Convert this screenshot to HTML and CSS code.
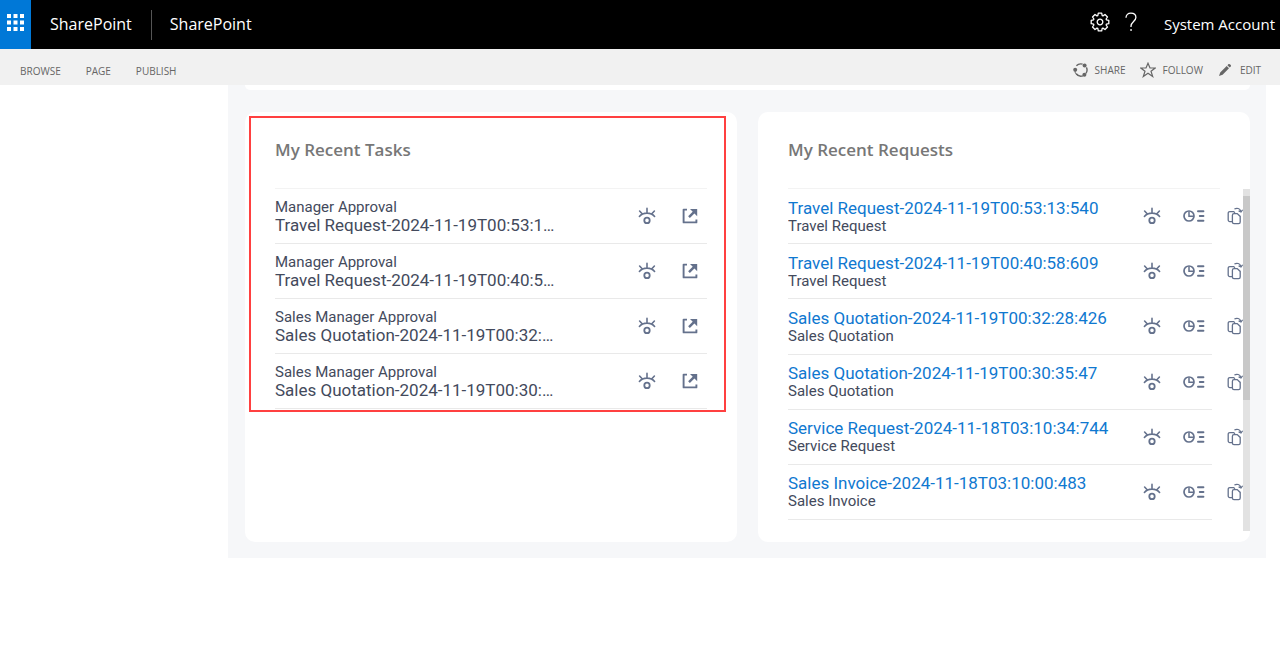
FILE: index.html
```html
<!DOCTYPE html>
<html lang="en">
<head>
    <meta charset="UTF-8">
    <meta name="viewport" content="width=device-width, initial-scale=1.0">
    <title>SharePoint</title>
    <link rel="stylesheet" href="styles.css">
</head>
<body>

    <!-- Shared icons -->
    <svg class="icon-defs" aria-hidden="true">
        <symbol id="icon-view" viewBox="0 0 18 18">
            <path d="M1.4 9.4C5 5 13 5 16.6 9.4M9 1.4v4.6M1.6 4 4.4 7M16.4 4 13.6 7" fill="none" stroke="currentColor" stroke-width="1.6" stroke-linecap="round"/>
            <circle cx="9" cy="13.4" r="2.7" fill="none" stroke="currentColor" stroke-width="1.8"/>
        </symbol>
        <symbol id="icon-open" viewBox="0 0 18 18">
            <path d="M6 2.6H2.6V15.4H15.4V12.4" fill="none" stroke="currentColor" stroke-width="1.9" stroke-linejoin="round"/>
            <path d="M8 10.2 13.5 4.7" fill="none" stroke="currentColor" stroke-width="2.4"/>
            <path d="M9 2h7.2v7.2z" fill="currentColor"/>
        </symbol>
        <symbol id="icon-report" viewBox="0 0 22 14">
            <circle cx="6" cy="7" r="5" fill="none" stroke="currentColor" stroke-width="1.7"/>
            <path d="M6 2.4v4.8h4.6" fill="none" stroke="currentColor" stroke-width="1.5"/>
            <path d="M15 2.2h5.4M16.8 7h3.6M15 11.8h5.4" fill="none" stroke="currentColor" stroke-width="2" stroke-linecap="round"/>
        </symbol>
        <symbol id="icon-copy" viewBox="0 0 16 18">
            <path d="M5 14.6H2.8a1.6 1.6 0 0 1-1.6-1.6V6.2a1.6 1.6 0 0 1 1.6-1.6h3.8L8 5.8" fill="none" stroke="currentColor" stroke-width="1.3"/>
            <path d="M7 6.6h3.2l3 2.8v5.6a1.6 1.6 0 0 1-1.6 1.6H7A1.6 1.6 0 0 1 5.4 15V8.2A1.6 1.6 0 0 1 7 6.6z" fill="none" stroke="currentColor" stroke-width="1.3"/>
            <path d="M7.4 2C10 .6 12.8 1.4 13.8 4.2M15.6 2.8 14 5 11.6 3.9" fill="none" stroke="currentColor" stroke-width="1.2"/>
        </symbol>
    </svg>

    <!-- Suite Bar -->
    <header class="suite-bar">
        <button class="app-launcher" aria-label="App launcher">
            <svg width="17" height="17" viewBox="0 0 17 17" fill="#fff">
                <path d="M0 0h4v4H0zM6.5 0h4v4h-4zM13 0h4v4h-4zM0 6.5h4v4H0zM6.5 6.5h4v4h-4zM13 6.5h4v4h-4zM0 13h4v4H0zM6.5 13h4v4h-4zM13 13h4v4h-4z"/>
            </svg>
        </button>
        <a class="brand" href="#">SharePoint</a>
        <a class="brand brand-site" href="#">SharePoint</a>
        <div class="suite-actions">
            <button aria-label="Settings">
                <svg width="20" height="20" viewBox="-10 -10 20 20" fill="none" stroke="#fff" stroke-width="1.3" stroke-linejoin="round">
                    <path d="M6.4-2.2 8.8-1.7V1.7L6.4 2.2 6.1 3 7.5 5 5 7.5 3 6.1 2.2 6.4 1.7 8.8H-1.7L-2.2 6.4-3 6.1-5 7.5-7.5 5-6.1 3-6.4 2.2-8.8 1.7V-1.7L-6.4-2.2-6.1-3-7.5-5-5-7.5-3-6.1-2.2-6.4-1.7-8.8H1.7L2.2-6.4 3-6.1 5-7.5 7.5-5 6.1-3z"/>
                    <circle r="2.8"/>
                </svg>
            </button>
            <button aria-label="Help">
                <svg width="14" height="20" viewBox="0 0 14 20" fill="none" stroke="#fff" stroke-width="1.3">
                    <path d="M2 5.8C2 2.8 4 1.2 6.9 1.2s5 1.6 5 4.3c0 3.6-4.9 4.4-4.9 8.5v1"/>
                    <path d="M6.2 18h1.7" stroke-width="1.7"/>
                </svg>
            </button>
        </div>
        <button class="account">System Account</button>
    </header>

    <!-- Ribbon -->
    <nav class="ribbon">
        <div class="ribbon-tabs">
            <a href="#">BROWSE</a>
            <a href="#">PAGE</a>
            <a href="#">PUBLISH</a>
        </div>
        <div class="ribbon-actions">
            <button>
                <svg width="16" height="16" viewBox="0 0 16 16" fill="none" stroke="#666" stroke-width="1.4">
                    <path d="M3.4 3.8A6 6 0 0 1 9.6 2.2M13.4 5.4A6 6 0 0 1 13 11.4M10 13.8A6 6 0 0 1 3.2 11.8"/>
                    <path d="M4.4 13.4A6 6 0 0 1 2 7.6" stroke-width="1"/>
                    <circle cx="11.6" cy="3.4" r="2" fill="#666" stroke="none"/>
                    <circle cx="2.2" cy="7.8" r="2" fill="#666" stroke="none"/>
                    <circle cx="11.4" cy="12.8" r="2" fill="#666" stroke="none"/>
                </svg>
                SHARE
            </button>
            <button>
                <svg width="16" height="16" viewBox="0 0 16 16" fill="none" stroke="#666" stroke-width="1.2">
                    <path d="M8 1.2 10 6h5.2L11 9.2l1.7 5.3L8 11.3l-4.7 3.2L5 9.2.8 6H6z"/>
                </svg>
                FOLLOW
            </button>
            <button>
                <svg width="16" height="14" viewBox="0 0 16 14" fill="#666">
                    <path d="M1 13 2.2 9.4 8.7 3 11 5.3 4.6 11.8zM9.4 2.3 10.6 1.1Q11.4.6 12.2 1.4L12.7 1.9Q13.4 2.6 12.8 3.5L11.7 4.6z"/>
                </svg>
                EDIT
            </button>
        </div>
    </nav>

    <main class="dashboard">
        <div class="card-end"></div>

        <div class="cards">
            <!-- Tasks -->
            <section class="card">
                <h2>My Recent Tasks</h2>
                <ul class="list" id="tasks"></ul>
                <div class="highlight"></div>
            </section>

            <!-- Requests -->
            <section class="card">
                <h2>My Recent Requests</h2>
                <div class="scroll-area">
                    <ul class="list" id="requests"></ul>
                    <div class="scrollbar"><div class="scroll-thumb"></div></div>
                </div>
            </section>
        </div>
    </main>

    <script src="script.js"></script>
</body>
</html>
```

FILE: styles.css
```css
/* Global Styles */
* {
    box-sizing: border-box;
}

body {
    margin: 0;
    background: #fff;
    font-family: Roboto, sans-serif;
    color: #434a5c;
}

button {
    display: flex;
    align-items: center;
    padding: 0;
    border: none;
    background: none;
    color: inherit;
    font: inherit;
    cursor: pointer;
}

a {
    color: inherit;
    text-decoration: none;
}

.icon-defs {
    display: none;
}

/* Suite Bar */
.suite-bar {
    display: flex;
    align-items: center;
    height: 49px;
    padding-right: 5px;
    background: #000;
    color: #fff;
    font-family: "Open Sans", sans-serif;
    font-size: 16px;
}

.app-launcher {
    justify-content: center;
    width: 31px;
    height: 49px;
    padding-bottom: 4px;
    background: #0078d7;
}

.brand {
    padding: 0 19px 2px;
    line-height: 28px;
}

.brand-site {
    padding-left: 18px;
    border-left: 1px solid #555;
}

.suite-actions {
    display: flex;
    gap: 14px;
    margin-left: auto;
    padding-bottom: 5px;
}

.account {
    margin-left: 26px;
    padding-bottom: 2px;
    font-size: 15px;
}

/* Ribbon */
.ribbon {
    display: flex;
    justify-content: space-between;
    align-items: center;
    height: 36px;
    padding: 6px 19px 0 20px;
    background: #f1f1f1;
    color: #666;
    font-family: "Open Sans", sans-serif;
    font-size: 10px;
}

.ribbon-tabs {
    display: flex;
    gap: 25px;
    padding-top: 2px;
}

.ribbon-actions {
    display: flex;
    gap: 15px;
}

.ribbon-actions button {
    gap: 6px;
}

/* Dashboard */
.dashboard {
    margin: 0 14px 0 228px;
    padding: 0 16px 16px 17px;
    background: #f6f7f9;
}

.card-end {
    height: 5px;
    margin-bottom: 22px;
    border-radius: 0 0 8px 8px;
    background: #fff;
}

.cards {
    display: grid;
    grid-template-columns: 1fr 1fr;
    gap: 21px;
}

.card {
    position: relative;
    padding: 0 30px 11px;
    border-radius: 10px;
    background: #fff;
}

.card h2 {
    margin: 0;
    padding: 24px 0;
    border-bottom: 1px solid #f3f3f3;
    color: #777;
    font-family: "Open Sans", sans-serif;
    font-size: 17px;
    font-weight: 600;
    line-height: 28px;
}

.highlight {
    position: absolute;
    top: 4px;
    left: 4px;
    right: 11px;
    height: 296px;
    border: 2px solid #ff4040;
}

/* Lists */
.list {
    display: grid;
    grid-auto-rows: 1fr;
    margin: 0;
    padding: 0;
    list-style: none;
}

#tasks {
    height: 220px;
}

#requests {
    height: 331px;
}

.list li {
    display: flex;
    justify-content: space-between;
    align-items: center;
    border-bottom: 1px solid #e9e9e9;
}

.item-small {
    font-size: 15px;
    line-height: 18px;
}

.item-large {
    font-size: 17px;
    line-height: 18px;
}

a.item-large {
    display: block;
    padding-top: 1px;
    color: #0f78d0;
}

.actions {
    display: flex;
    align-items: center;
    color: #64718c;
}

#tasks .item-large {
    padding-bottom: 1px;
}

#tasks .actions {
    gap: 25px;
    padding-right: 8px;
}

/* Request list scrolls past the card padding */
.scroll-area {
    position: relative;
    height: 342px;
    margin-right: -30px;
    overflow: hidden;
}

#requests li {
    margin-right: 38px;
}

#requests .actions {
    gap: 22px;
    margin-right: -31px;
}

.scrollbar {
    position: absolute;
    top: 0;
    right: 0;
    bottom: 0;
    width: 7px;
    padding-top: 7px;
    background: #e2e2e2;
}

.scroll-thumb {
    height: 204px;
    background: #c8c8c8;
}
```

FILE: script.js
```js
const tasks = [
    ["Manager Approval", "Travel Request-2024-11-19T00:53:1…"],
    ["Manager Approval", "Travel Request-2024-11-19T00:40:5…"],
    ["Sales Manager Approval", "Sales Quotation-2024-11-19T00:32:…"],
    ["Sales Manager Approval", "Sales Quotation-2024-11-19T00:30:…"]
];

const requests = [
    ["Travel Request-2024-11-19T00:53:13:540", "Travel Request"],
    ["Travel Request-2024-11-19T00:40:58:609", "Travel Request"],
    ["Sales Quotation-2024-11-19T00:32:28:426", "Sales Quotation"],
    ["Sales Quotation-2024-11-19T00:30:35:47", "Sales Quotation"],
    ["Service Request-2024-11-18T03:10:34:744", "Service Request"],
    ["Sales Invoice-2024-11-18T03:10:00:483", "Sales Invoice"]
];

function icon(name, label, width, height) {
    return `<button aria-label="${label}"><svg width="${width}" height="${height}"><use href="#icon-${name}"/></svg></button>`;
}

document.getElementById("tasks").innerHTML = tasks.map(([step, title]) => `
    <li>
        <div>
            <div class="item-small">${step}</div>
            <div class="item-large">${title}</div>
        </div>
        <div class="actions">
            ${icon("view", "View", 18, 18)}
            ${icon("open", "Open", 18, 18)}
        </div>
    </li>`).join("");

document.getElementById("requests").innerHTML = requests.map(([title, type]) => `
    <li>
        <div>
            <a class="item-large" href="#">${title}</a>
            <div class="item-small">${type}</div>
        </div>
        <div class="actions">
            ${icon("view", "View", 18, 18)}
            ${icon("report", "Report", 22, 14)}
            ${icon("copy", "Copy", 16, 18)}
        </div>
    </li>`).join("");
```
